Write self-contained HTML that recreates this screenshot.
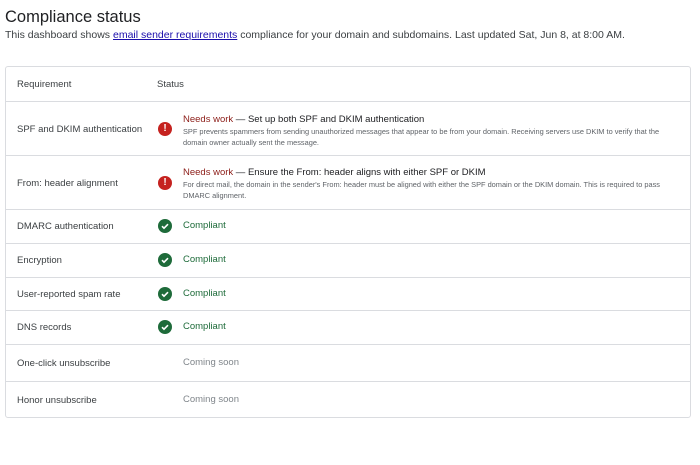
<!DOCTYPE html>
<html><head><style>
body{margin:0;width:700px;height:465px;background:#fff;font-family:"Liberation Sans",Arial,sans-serif;color:#202124;position:relative;overflow:hidden}
.t{position:absolute;left:5px;top:8px;font-size:16.5px;color:#202124}
.s{position:absolute;left:5px;top:29px;font-size:10.5px;color:#3c4043}
.s a{color:#1a0dab;text-decoration:underline}
.box{position:absolute;left:5px;top:66px;width:684px;height:350px;border:1px solid #dadce0;border-radius:3px}
.r{position:absolute;left:0;right:0;border-top:1px solid #dadce0}
.c1{position:absolute;left:11px;font-size:9.5px;color:#3c4043}
.ic{position:absolute;left:152px;width:14px;height:14px;border-radius:50%}
.red{background:#c5221f;color:#fff;font-size:10px;font-weight:bold;text-align:center;line-height:14px}
.grn{background:#1e6b3a}
.st{position:absolute;left:177px;font-size:9.5px}
.d{position:absolute;left:177px;font-size:7.4px;color:#5f6368;line-height:10.5px;width:485px}
</style></head><body>
<div class="t">Compliance status</div>
<div class="s">This dashboard shows <a>email sender requirements</a> compliance for your domain and subdomains. Last updated Sat, Jun 8, at 8:00 AM.</div>
<div class="box">
<div class="c1" style="top:12px">Requirement</div><div class="c1" style="left:151px;top:12px">Status</div>
<div class="r" style="top:34px"></div>
<div class="c1" style="top:57px">SPF and DKIM authentication</div>
<div class="ic red" style="top:55px">!</div>
<div class="st" style="top:47px"><span style="color:#8c1d18">Needs work</span> — Set up both SPF and DKIM authentication</div>
<div class="d" style="top:60px">SPF prevents spammers from sending unauthorized messages that appear to be from your domain. Receiving servers use DKIM to verify that the domain owner actually sent the message.</div>
<div class="r" style="top:88px"></div>
<div class="c1" style="top:111px">From: header alignment</div>
<div class="ic red" style="top:109px">!</div>
<div class="st" style="top:100px"><span style="color:#8c1d18">Needs work</span> — Ensure the From: header aligns with either SPF or DKIM</div>
<div class="d" style="top:113px">For direct mail, the domain in the sender's From: header must be aligned with either the SPF domain or the DKIM domain. This is required to pass DMARC alignment.</div>
<div class="r" style="top:142px"></div>
<div class="c1" style="top:154px">DMARC authentication</div>
<div class="ic grn" style="top:152px"><svg width="14" height="14"><path d="M4 7.2l2 2 4-4" stroke="#fff" stroke-width="1.6" fill="none"/></svg></div>
<div class="st" style="top:153px;color:#1e6b3a">Compliant</div>
<div class="r" style="top:176px"></div>
<div class="c1" style="top:188px">Encryption</div>
<div class="ic grn" style="top:186px"><svg width="14" height="14"><path d="M4 7.2l2 2 4-4" stroke="#fff" stroke-width="1.6" fill="none"/></svg></div>
<div class="st" style="top:187px;color:#1e6b3a">Compliant</div>
<div class="r" style="top:210px"></div>
<div class="c1" style="top:222px">User-reported spam rate</div>
<div class="ic grn" style="top:220px"><svg width="14" height="14"><path d="M4 7.2l2 2 4-4" stroke="#fff" stroke-width="1.6" fill="none"/></svg></div>
<div class="st" style="top:221px;color:#1e6b3a">Compliant</div>
<div class="r" style="top:243px"></div>
<div class="c1" style="top:255px">DNS records</div>
<div class="ic grn" style="top:253px"><svg width="14" height="14"><path d="M4 7.2l2 2 4-4" stroke="#fff" stroke-width="1.6" fill="none"/></svg></div>
<div class="st" style="top:254px;color:#1e6b3a">Compliant</div>
<div class="r" style="top:277px"></div>
<div class="c1" style="top:291px">One-click unsubscribe</div>
<div class="st" style="top:290px;color:#80868b">Coming soon</div>
<div class="r" style="top:314px"></div>
<div class="c1" style="top:328px">Honor unsubscribe</div>
<div class="st" style="top:327px;color:#80868b">Coming soon</div>
</div>
</body></html>
